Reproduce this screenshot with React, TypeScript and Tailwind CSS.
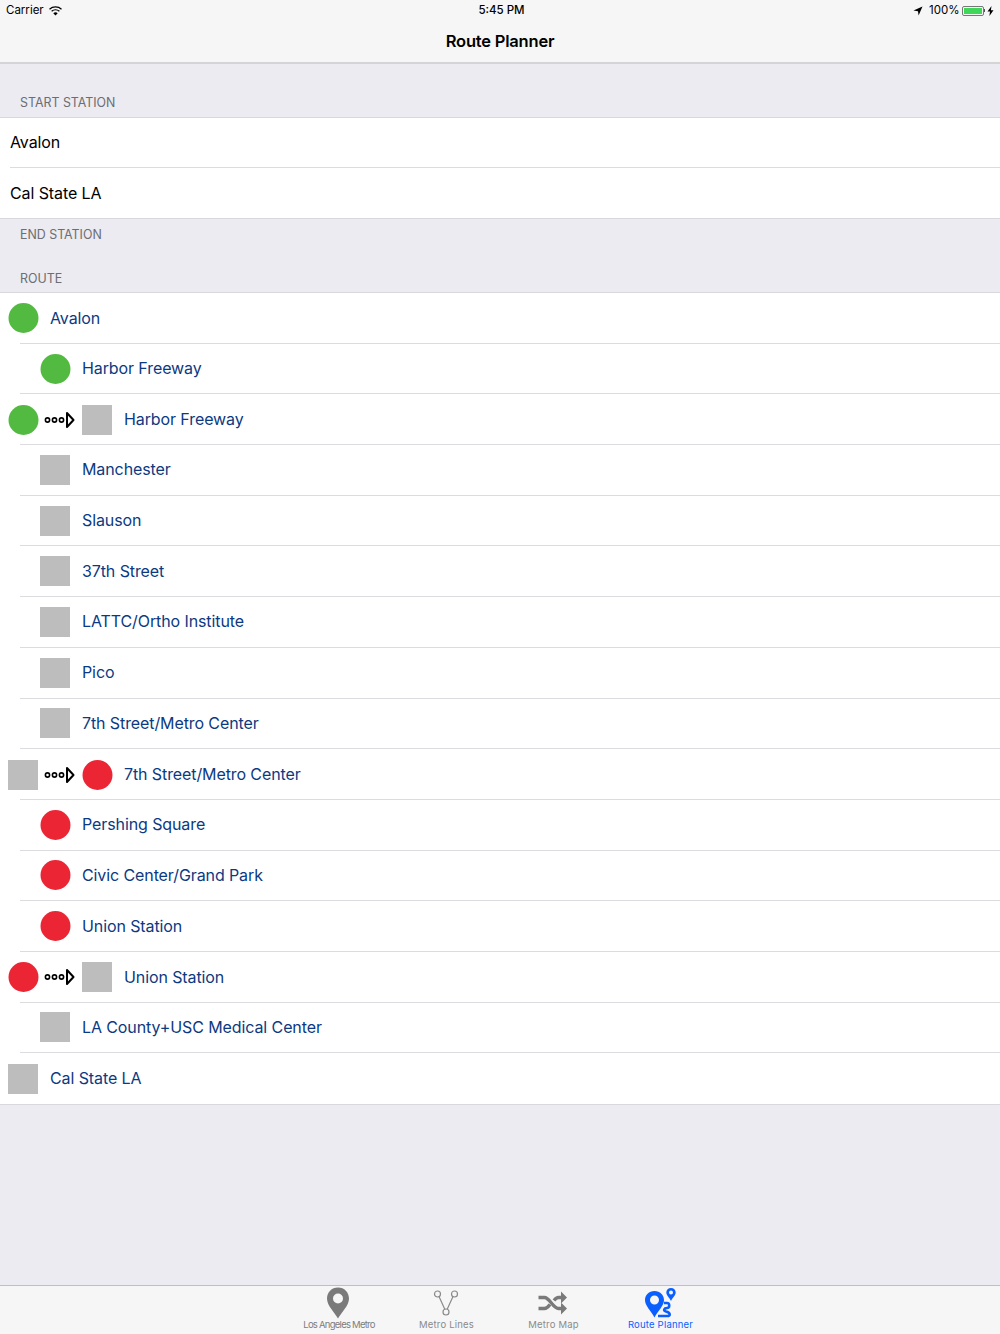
import React from 'react';

type Mark = 'green' | 'red' | 'gray';

type Stop = {
  name: string;
  mark: Mark;
  from?: Mark;
  edge?: boolean;
};

const stops: Stop[] = [
  { name: 'Avalon', mark: 'green', edge: true },
  { name: 'Harbor Freeway', mark: 'green' },
  { name: 'Harbor Freeway', mark: 'gray', from: 'green' },
  { name: 'Manchester', mark: 'gray' },
  { name: 'Slauson', mark: 'gray' },
  { name: '37th Street', mark: 'gray' },
  { name: 'LATTC/Ortho Institute', mark: 'gray' },
  { name: 'Pico', mark: 'gray' },
  { name: '7th Street/Metro Center', mark: 'gray' },
  { name: '7th Street/Metro Center', mark: 'red', from: 'gray' },
  { name: 'Pershing Square', mark: 'red' },
  { name: 'Civic Center/Grand Park', mark: 'red' },
  { name: 'Union Station', mark: 'red' },
  { name: 'Union Station', mark: 'gray', from: 'red' },
  { name: 'LA County+USC Medical Center', mark: 'gray' },
  { name: 'Cal State LA', mark: 'gray', edge: true },
];

const LineMark = ({ mark }: { mark: Mark }) => {
  if (mark === 'green') return <div className="w-[30px] h-[30px] shrink-0 rounded-full bg-[#53ba41] translate-x-[0.5px]" />;
  if (mark === 'red') return <div className="w-[30px] h-[30px] shrink-0 rounded-full bg-[#ec2535] translate-x-[0.5px]" />;
  return <div className="w-[30px] h-[30px] shrink-0 bg-[#bdbdbd]" />;
};

const TransferArrow = () => (
  <svg width="32" height="18" viewBox="0 0 32 18" className="shrink-0 mx-[6px]">
    <g fill="none" stroke="#000" strokeWidth="1.6">
      <circle cx="3.5" cy="9" r="2.1" />
      <circle cx="10.5" cy="9" r="2.1" />
      <circle cx="17.5" cy="9" r="2.1" />
      <path d="M23 2 L29.5 9 L23 16 Z" strokeWidth="2" strokeLinejoin="round" />
    </g>
  </svg>
);

const RouteRow = ({ stop, last }: { stop: Stop; last: boolean }) => {
  const flush = stop.edge || stop.from;
  return (
    <div className={`h-[50.7px] flex items-center ${flush ? 'pl-2' : 'pl-5'}`}>
      <div
        className={`flex-1 h-full flex items-center ${flush ? '' : 'pl-5'} ${
          last ? '' : stop.from || stop.edge ? 'relative' : 'border-b border-[#dcdce0]'
        }`}
      >
        {stop.from && <LineMark mark={stop.from} />}
        {stop.from && <TransferArrow />}
        <LineMark mark={stop.mark} />
        <span className="ml-3 mb-px text-[#0b3a82] text-[16px] tracking-[-0.1px]">{stop.name}</span>
        {!last && flush && <div className="absolute left-3 right-0 bottom-0 h-px bg-[#dcdce0]" />}
      </div>
    </div>
  );
};

const SectionLabel = ({ children, className }: { children: React.ReactNode; className: string }) => (
  <div className={`px-5 text-[12.4px] leading-4 text-[#6d6d72] ${className}`}>{children}</div>
);

const PinIcon = () => (
  <svg width="24" height="32" viewBox="0 0 24 32" className="-ml-[3px]">
    <path
      fillRule="evenodd"
      fill="#7a7a7a"
      d="M12 0.5C5.6 0.5 1 5.4 1 11.4C1 18.5 8 24.5 12 31.5C16 24.5 23 18.5 23 11.4C23 5.4 18.4 0.5 12 0.5ZM12 6.5A5 5 0 1 1 12 16.5A5 5 0 1 1 12 6.5Z"
    />
  </svg>
);

const LinesIcon = () => (
  <svg width="26" height="30" viewBox="0 0 26 30" fill="none" stroke="#8a8a8a" strokeWidth="1.2" className="-ml-[2px]">
    <circle cx="4.5" cy="6" r="3" />
    <circle cx="21.5" cy="6" r="3" />
    <circle cx="13" cy="24" r="3" />
    <path d="M6 8.6 L11.8 21.2 M20 8.6 L14.2 21.2" />
  </svg>
);

const ShuffleIcon = () => (
  <svg width="30" height="24" viewBox="0 0 30 24" fill="none" className="-ml-px">
    <path d="M0.5 6.5H6.5C11.5 6.5 15 17.5 20.5 17.5H25" stroke="#7a7a7a" strokeWidth="3.4" />
    <path d="M0.5 17.5H6.5C8.8 17.5 10.5 15.5 12 13.5M16 9.5C17.3 7.8 18.8 6.5 20.5 6.5H25" stroke="#7a7a7a" strokeWidth="3.4" />
    <path d="M23 0.5L29 6.5L23 12.5Z M23 11.5L29 17.5L23 23.5Z" fill="#7a7a7a" />
  </svg>
);

const RouteIcon = () => (
  <svg width="34" height="32" viewBox="0 0 34 32">
    <path
      fillRule="evenodd"
      fill="#0a60ff"
      d="M10.5 4C4.9 4 1 8 1 13C1 19 7 23.5 10.5 30.5C14 23.5 20 19 20 13C20 8 16.1 4 10.5 4ZM10.5 8.5A4.5 4.5 0 1 1 10.5 17.5A4.5 4.5 0 1 1 10.5 8.5Z"
    />
    <path
      fillRule="evenodd"
      fill="#0a60ff"
      d="M27 1C24.2 1 22.3 3 22.3 5.5C22.3 8.5 25.3 10.5 27 14C28.7 10.5 31.7 8.5 31.7 5.5C31.7 3 29.8 1 27 1ZM27 3.6A2 2 0 1 1 27 7.6A2 2 0 1 1 27 3.6Z"
    />
    <path
      d="M20 16H23C26 16 26 21 23 21C20 21 19 23.5 22 24.5C26 25.5 27.5 29 23 29H14"
      fill="none"
      stroke="#0a60ff"
      strokeWidth="2.6"
    />
  </svg>
);

const TabItem = ({
  icon,
  label,
  labelClass,
}: {
  icon: React.ReactNode;
  label: string;
  labelClass: string;
}) => (
  <div className="w-[107px] flex flex-col items-center">
    <div className="h-[33px] flex items-center justify-center">{icon}</div>
    <div className={`text-[9.5px] leading-3 whitespace-nowrap ${labelClass}`}>{label}</div>
  </div>
);

export default function App() {
  return (
    <div className="w-[1000px] h-[1334px] flex flex-col bg-[#ebebf1] font-['Inter','Liberation_Sans',sans-serif] text-black overflow-hidden">
      <header className="h-[64px] shrink-0 bg-[#f6f6f6] border-b-2 border-[#d4d4d7]">
        <div className="h-[21px] px-[5px] grid grid-cols-3 items-center text-[11.5px]">
          <div className="flex items-center gap-[5px] pl-px">
            <span>Carrier</span>
            <svg width="13" height="10" viewBox="0 0 13 10">
              <path d="M0.5 3.2A9 9 0 0 1 12.5 3.2" fill="none" stroke="#000" strokeWidth="1.3" />
              <path d="M2.6 5.3A6 6 0 0 1 10.4 5.3" fill="none" stroke="#000" strokeWidth="1.3" />
              <path d="M4.3 7.2A3.4 3.4 0 0 1 8.7 7.2L6.5 9.6Z" fill="#000" />
            </svg>
          </div>
          <div className="text-center font-medium pl-[3px]">5:45 PM</div>
          <div className="flex items-center justify-end">
            <svg width="10" height="10" viewBox="0 0 10 10" className="mr-[6px]">
              <path d="M9.5 0.5L0.5 4.6L5 5.2L5.6 9.5Z" fill="#000" />
            </svg>
            <span>100%</span>
            <div className="ml-[2px] w-[22px] h-[10px] rounded-[2px] border border-[#777] p-px">
              <div className="w-full h-full bg-[#3fd65a]" />
            </div>
            <div className="w-[1.5px] h-[3px] bg-[#555]" />
            <svg width="7" height="10" viewBox="0 0 7 10" className="ml-[2px] mr-px">
              <path d="M4.5 0L0.5 5.6H3L2.4 10L6.5 4.2H3.9Z" fill="#000" />
            </svg>
          </div>
        </div>
        <div className="h-[41px] flex items-center justify-center text-[16.5px] font-semibold tracking-[-0.2px]">
          Route Planner
        </div>
      </header>

      <SectionLabel className="pt-[31px] pb-[6px]">START STATION</SectionLabel>
      <div className="bg-white border-y border-[#d9d9dd] pl-[10px] text-[16px] tracking-[-0.1px]">
        <div className="h-[50px] flex items-center border-b border-[#dcdce0] pb-px">Avalon</div>
        <div className="h-[50px] flex items-center">Cal State LA</div>
      </div>
      <SectionLabel className="pt-[8px]">END STATION</SectionLabel>
      <SectionLabel className="pt-[28px] pb-[5px]">ROUTE</SectionLabel>

      <div className="bg-white border-y border-[#d9d9dd]">
        {stops.map((stop, i) => (
          <RouteRow key={i} stop={stop} last={i === stops.length - 1} />
        ))}
      </div>

      <nav className="mt-auto h-[49px] shrink-0 bg-[#f6f6f6] border-t border-[#bfbfc2] flex justify-center">
        <TabItem icon={<PinIcon />} label="Los Angeles Metro" labelClass="text-[#7d7d7d] tracking-[-0.75px] -ml-px" />
        <TabItem icon={<LinesIcon />} label="Metro Lines" labelClass="text-[#8a8a8a] tracking-[0.2px]" />
        <TabItem icon={<ShuffleIcon />} label="Metro Map" labelClass="text-[#8a8a8a] tracking-[0.2px]" />
        <TabItem icon={<RouteIcon />} label="Route Planner" labelClass="text-[#0a60ff] tracking-[0.2px]" />
      </nav>
    </div>
  );
}
